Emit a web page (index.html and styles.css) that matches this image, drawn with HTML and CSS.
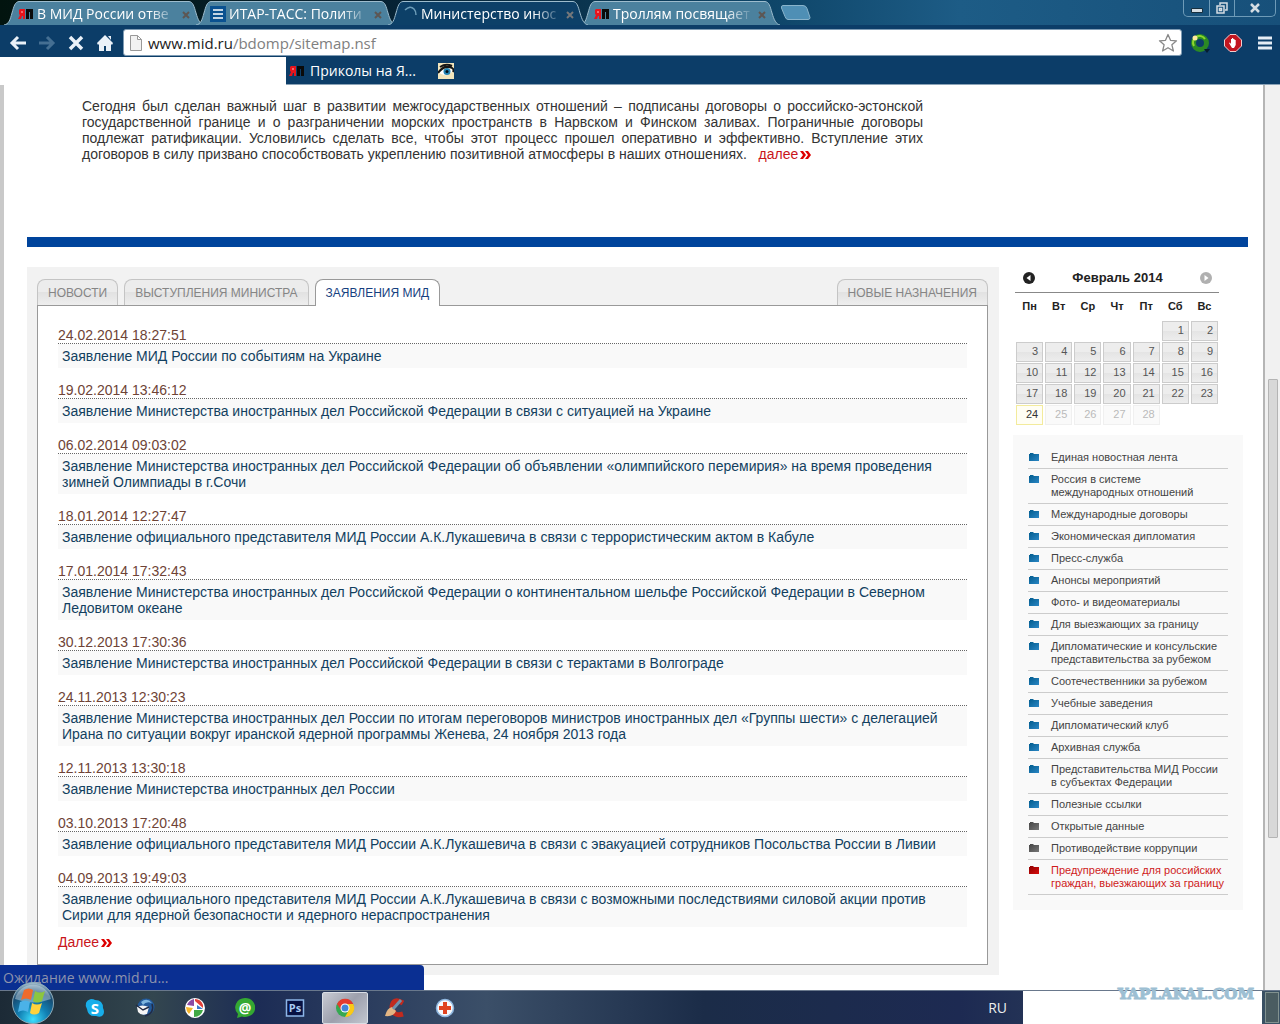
FILE: index.html
```html
<!DOCTYPE html>
<html lang="ru">
<head>
<meta charset="utf-8">
<title>Министерство иностранных дел</title>
<link rel="stylesheet" href="styles.css">
</head>
<body>
<svg class="defs" aria-hidden="true">
  <defs>
    <linearGradient id="blue" x1="0" y1="0" x2="1" y2="1"><stop offset="0" stop-color="#015b8d"/><stop offset="1" stop-color="#2a86c4"/></linearGradient>
    <linearGradient id="gray" x1="0" y1="0" x2="1" y2="1"><stop offset="0" stop-color="#444"/><stop offset="1" stop-color="#777"/></linearGradient>
    <linearGradient id="red" x1="0" y1="0" x2="1" y2="1"><stop offset="0" stop-color="#8d0000"/><stop offset="1" stop-color="#d80d0d"/></linearGradient>
    <radialGradient id="orb" cx=".5" cy=".9" r=".9"><stop offset="0" stop-color="#3fe0ff"/><stop offset=".4" stop-color="#1180b4"/><stop offset=".75" stop-color="#174a70"/><stop offset="1" stop-color="#a9c4d2"/></radialGradient>
    <path id="folder" d="M0 2V1h1V0h3l1 1h5v7H0z"/>
    <path id="tabshape" d="M0 24C5 23 6 19 8 12S11 1 15 .5H185C189 1 190 5 192 12S196 23 200 24"/>
    <path id="more" d="M0 0h3l3 4-3 4H0l3-4zM5 0h3l3 4-3 4H5l3-4z"/>
    <g id="yap"><path fill="#e8141c" d="M2 1h5v10H5V8H4l-1 3H0l2-4-1-1V2z"/><path fill="#f46a6a" d="M3 3h2v2H3z"/><path fill="#0a0a0a" d="M8 1h7v10h-3V4h-1v7H8z"/></g>
  </defs>
</svg>

<header class="tabstrip">
  <nav class="tabs">
    <div class="tab"><svg class="shape" viewBox="0 0 200 24" preserveAspectRatio="none"><use href="#tabshape"/></svg><svg class="favicon" viewBox="0 0 16 12"><use href="#yap"/></svg><a href="#" class="tab-title">В МИД России отве</a><button class="close" aria-label="Закрыть"><svg viewBox="0 0 8 8"><path d="M1 1l6 6M7 1L1 7"/></svg></button></div>
    <div class="tab"><svg class="shape" viewBox="0 0 200 24" preserveAspectRatio="none"><use href="#tabshape"/></svg><svg class="favicon" viewBox="0 0 16 16"><path fill="#0a5190" d="M0 0h16v16H0z"/><path stroke="#fff" stroke-width="1.500" d="M3 4h10M3 8h10M3 12h10"/></svg><a href="#" class="tab-title">ИТАР-ТАСС: Полити</a><button class="close" aria-label="Закрыть"><svg viewBox="0 0 8 8"><path d="M1 1l6 6M7 1L1 7"/></svg></button></div>
    <div class="tab current"><svg class="shape" viewBox="0 0 200 24" preserveAspectRatio="none"><use href="#tabshape"/></svg><svg class="favicon" viewBox="0 0 16 16"><path fill="none" stroke="#6c9cb8" stroke-width="1.500" d="M3 4q5-5 9-1 2 2 2 6"/></svg><a href="#" class="tab-title">Министерство инос</a><button class="close" aria-label="Закрыть"><svg viewBox="0 0 8 8"><path d="M1 1l6 6M7 1L1 7"/></svg></button></div>
    <div class="tab"><svg class="shape" viewBox="0 0 200 24" preserveAspectRatio="none"><use href="#tabshape"/></svg><svg class="favicon" viewBox="0 0 16 12"><use href="#yap"/></svg><a href="#" class="tab-title">Троллям посвящает</a><button class="close" aria-label="Закрыть"><svg viewBox="0 0 8 8"><path d="M1 1l6 6M7 1L1 7"/></svg></button></div>
    <button class="newtab" aria-label="Новая вкладка"><svg viewBox="0 0 32 16"><path fill="#4f8fb5" stroke="#8ab4cc" d="M3 .5h20q3 0 4 3l3 9q0 2-2 2H8q-2 0-3-3L1.500 3Q1 .5 3 .5z"/></svg></button>
  </nav>
  <div class="window-buttons">
    <button aria-label="Свернуть"><svg width="12" height="12" viewBox="0 0 12 12"><path fill="#d5dde3" stroke="#17303f" d="M.5 6.500h11v4H.5z"/></svg></button>
    <button aria-label="Восстановить"><svg width="12" height="12" viewBox="0 0 12 12"><path fill="none" stroke="#d5dde3" stroke-width="1.500" d="M4 3V1h7v7H9M1 4h7v7H1zM3.500 6.500h2v2h-2z"/></svg></button>
    <button class="wide" aria-label="Закрыть окно"><svg width="10" height="10" viewBox="0 0 10 10"><path stroke="#d5dde3" stroke-width="2.500" d="M1 1l8 8M9 1L1 9"/></svg></button>
  </div>
</header>

<div class="toolbar">
  <button aria-label="Назад"><svg width="18" height="16" viewBox="0 0 18 16"><path fill="none" stroke="#eaf1f8" stroke-width="3" d="M17 8H3M9 2L3 8l6 6"/></svg></button>
  <button aria-label="Вперёд"><svg width="18" height="16" viewBox="0 0 18 16"><path fill="none" stroke="#456f92" stroke-width="3" d="M1 8h14M9 2l6 6-6 6"/></svg></button>
  <button aria-label="Остановить"><svg width="16" height="16" viewBox="0 0 16 16"><path stroke="#eaf1f8" stroke-width="3.500" d="M2 2l12 12M14 2L2 14"/></svg></button>
  <button aria-label="Домой"><svg width="16" height="16" viewBox="0 0 16 16"><path fill="#eaf1f8" d="M8 0l8 8-1 2-1-1v7H9v-5H7v5H2V9l-1 1-1-2zM11 1h3v4z"/></svg></button>
  <div class="omnibox">
    <svg width="12" height="16" viewBox="0 0 12 16"><path fill="#f2f2f2" stroke="#999" d="M.5.5h7l4 4v11H.5zM7.500.5v4h4"/></svg>
    <a href="#" class="address">www.mid.ru<span>/bdomp/sitemap.nsf</span></a>
    <svg class="star" width="20" height="20" viewBox="0 0 20 20"><path fill="#fff" stroke="#888" stroke-width="1.300" stroke-linejoin="round" d="M10 1.500l2.500 5.800 6 .5-4.600 4 1.500 6.200-5.400-3.300L4.600 18l1.500-6.200-4.600-4 6-.5z"/></svg>
  </div>
  <div class="extensions">
    <button aria-label="Расширение"><svg width="20" height="20" viewBox="0 0 20 20"><circle cx="10" cy="10" r="6.500" fill="none" stroke="#2b8a24" stroke-width="5"/><path fill="none" stroke="#8ed62d" stroke-width="2" d="M4 13A6.500 6.500 0 0 1 15 6"/><circle cx="5" cy="5" r="2.500" fill="#ffe9a0"/><path fill="#051c30" d="M14 16h6l-3 4z"/></svg></button>
    <button aria-label="Блокировщик"><svg width="18" height="18" viewBox="0 0 18 18"><path fill="#c21520" stroke="#f0cfd0" d="M6 .5h6L17.500 6v6L12 17.500H6L.5 12V6z"/><path fill="#fff" d="M5 9l1-.5L7 10V5h1V4h1.200v1h1.200l.3 1h1v5l-1.700 3H8z"/></svg></button>
    <button aria-label="Меню"><svg width="14" height="16" viewBox="0 0 14 16"><path stroke="#e6edf5" stroke-width="3" d="M0 3h14M0 8h14M0 13h14"/></svg></button>
  </div>
</div>

<div class="bookmarks">
  <div class="bookmark-list">
    <svg width="16" height="12" viewBox="0 0 16 12"><use href="#yap"/></svg>
    <a href="#">Приколы на Я...</a>
    <svg class="eye" width="16" height="16" viewBox="0 0 16 16"><path fill="#f3e6bd" d="M0 0h16v16H0z"/><path fill="#fff" d="M1 10q6-7 14-3-3 6-9 5z"/><circle cx="9" cy="8.500" r="3.500" fill="#2384b4"/><circle cx="9" cy="8.500" r="1.500" fill="#041018"/><path fill="none" stroke="#151515" stroke-width="2" d="M0 10Q5 3 11 4t4 5M2 4q6-4 12-1"/></svg>
  </div>
</div>

<div class="viewport">
  <main class="page">
    <p class="intro">Сегодня был сделан важный шаг в развитии межгосударственных отношений – подписаны договоры о российско-эстонской государственной границе и о разграничении морских пространств в Нарвском и Финском заливах. Пограничные договоры подлежат ратификации. Условились сделать все, чтобы этот процесс прошел оперативно и эффективно. Вступление этих договоров в силу призвано способствовать укреплению позитивной атмосферы в наших отношениях. &nbsp; <a href="#" class="more">далее<svg viewBox="0 0 11 8"><use href="#more"/></svg></a></p>
    <div class="divider"></div>
    <div class="columns">
      <section class="news">
        <nav class="news-tabs">
          <a href="#">НОВОСТИ</a>
          <a href="#">ВЫСТУПЛЕНИЯ МИНИСТРА</a>
          <a href="#" class="selected">ЗАЯВЛЕНИЯ МИД</a>
          <a href="#" class="last">НОВЫЕ НАЗНАЧЕНИЯ</a>
        </nav>
        <div class="panel">
          <article><time>24.02.2014 18:27:51</time><a href="#">Заявление МИД России по событиям на Украине</a></article>
          <article><time>19.02.2014 13:46:12</time><a href="#">Заявление Министерства иностранных дел Российской Федерации в связи с ситуацией на Украине</a></article>
          <article><time>06.02.2014 09:03:02</time><a href="#">Заявление Министерства иностранных дел Российской Федерации об объявлении «олимпийского перемирия» на время проведения зимней Олимпиады в г.Сочи</a></article>
          <article><time>18.01.2014 12:27:47</time><a href="#">Заявление официального представителя МИД России А.К.Лукашевича в связи с террористическим актом в Кабуле</a></article>
          <article><time>17.01.2014 17:32:43</time><a href="#">Заявление Министерства иностранных дел Российской Федерации о континентальном шельфе Российской Федерации в Северном Ледовитом океане</a></article>
          <article><time>30.12.2013 17:30:36</time><a href="#">Заявление Министерства иностранных дел Российской Федерации в связи с терактами в Волгограде</a></article>
          <article><time>24.11.2013 12:30:23</time><a href="#">Заявление Министерства иностранных дел России по итогам переговоров министров иностранных дел «Группы шести» с делегацией Ирана по ситуации вокруг иранской ядерной программы Женева, 24 ноября 2013 года</a></article>
          <article><time>12.11.2013 13:30:18</time><a href="#">Заявление Министерства иностранных дел России</a></article>
          <article><time>03.10.2013 17:20:48</time><a href="#">Заявление официального представителя МИД России А.К.Лукашевича в связи с эвакуацией сотрудников Посольства России в Ливии</a></article>
          <article><time>04.09.2013 19:49:03</time><a href="#">Заявление официального представителя МИД России А.К.Лукашевича в связи с возможными последствиями силовой акции против Сирии для ядерной безопасности и ядерного нераспространения</a></article>
          <a href="#" class="more">Далее<svg viewBox="0 0 11 8"><use href="#more"/></svg></a>
        </div>
      </section>
      <aside>
        <div class="calendar">
          <div class="month">
            <button aria-label="Предыдущий месяц"><svg viewBox="0 0 12 12"><circle cx="6" cy="6" r="6" fill="#222"/><path fill="#fff" d="M7.500 3v6l-4-3z"/></svg></button>
            <strong>Февраль 2014</strong>
            <button aria-label="Следующий месяц"><svg viewBox="0 0 12 12"><circle cx="6" cy="6" r="6" fill="#b0b0b0"/><path fill="#fff" d="M4.500 3v6l4-3z"/></svg></button>
          </div>
          <table>
            <thead><tr><th>Пн</th><th>Вт</th><th>Ср</th><th>Чт</th><th>Пт</th><th>Сб</th><th>Вс</th></tr></thead>
            <tbody>
              <tr><td></td><td></td><td></td><td></td><td></td><td><a href="#">1</a></td><td><a href="#">2</a></td></tr>
              <tr><td><a href="#">3</a></td><td><a href="#">4</a></td><td><a href="#">5</a></td><td><a href="#">6</a></td><td><a href="#">7</a></td><td><a href="#">8</a></td><td><a href="#">9</a></td></tr>
              <tr><td><a href="#">10</a></td><td><a href="#">11</a></td><td><a href="#">12</a></td><td><a href="#">13</a></td><td><a href="#">14</a></td><td><a href="#">15</a></td><td><a href="#">16</a></td></tr>
              <tr><td><a href="#">17</a></td><td><a href="#">18</a></td><td><a href="#">19</a></td><td><a href="#">20</a></td><td><a href="#">21</a></td><td><a href="#">22</a></td><td><a href="#">23</a></td></tr>
              <tr><td><a href="#" class="today">24</a></td><td><span>25</span></td><td><span>26</span></td><td><span>27</span></td><td><span>28</span></td><td></td><td></td></tr>
            </tbody>
          </table>
        </div>
        <ul class="menu">
          <li><svg viewBox="0 0 10 8"><use href="#folder"/></svg><a href="#">Единая новостная лента</a></li>
          <li><svg viewBox="0 0 10 8"><use href="#folder"/></svg><a href="#">Россия в системе<br>международных отношений</a></li>
          <li><svg viewBox="0 0 10 8"><use href="#folder"/></svg><a href="#">Международные договоры</a></li>
          <li><svg viewBox="0 0 10 8"><use href="#folder"/></svg><a href="#">Экономическая дипломатия</a></li>
          <li><svg viewBox="0 0 10 8"><use href="#folder"/></svg><a href="#">Пресс-служба</a></li>
          <li><svg viewBox="0 0 10 8"><use href="#folder"/></svg><a href="#">Анонсы мероприятий</a></li>
          <li><svg viewBox="0 0 10 8"><use href="#folder"/></svg><a href="#">Фото- и видеоматериалы</a></li>
          <li><svg viewBox="0 0 10 8"><use href="#folder"/></svg><a href="#">Для выезжающих за границу</a></li>
          <li><svg viewBox="0 0 10 8"><use href="#folder"/></svg><a href="#">Дипломатические и консульские<br>представительства за рубежом</a></li>
          <li><svg viewBox="0 0 10 8"><use href="#folder"/></svg><a href="#">Соотечественники за рубежом</a></li>
          <li><svg viewBox="0 0 10 8"><use href="#folder"/></svg><a href="#">Учебные заведения</a></li>
          <li><svg viewBox="0 0 10 8"><use href="#folder"/></svg><a href="#">Дипломатический клуб</a></li>
          <li><svg viewBox="0 0 10 8"><use href="#folder"/></svg><a href="#">Архивная служба</a></li>
          <li><svg viewBox="0 0 10 8"><use href="#folder"/></svg><a href="#">Представительства МИД России<br>в субъектах Федерации</a></li>
          <li><svg viewBox="0 0 10 8"><use href="#folder"/></svg><a href="#">Полезные ссылки</a></li>
          <li class="muted"><svg viewBox="0 0 10 8"><use href="#folder"/></svg><a href="#">Открытые данные</a></li>
          <li class="muted"><svg viewBox="0 0 10 8"><use href="#folder"/></svg><a href="#">Противодействие коррупции</a></li>
          <li class="warning"><svg viewBox="0 0 10 8"><use href="#folder"/></svg><a href="#">Предупреждение для российских<br>граждан, выезжающих за границу</a></li>
        </ul>
      </aside>
    </div>
  </main>
  <div class="scrollbar"><div class="thumb"></div></div>
  <div class="status">Ожидание www.mid.ru...</div>
</div>

<footer class="taskbar">
  <button class="start" aria-label="Пуск"><svg viewBox="0 0 44 42"><circle cx="22" cy="21" r="20.500" fill="url(#orb)" stroke="#8eabb9"/><path fill="#d4e3ea" opacity=".45" d="M4 17a18.500 18.500 0 0 1 36 0Q22 24 4 17z"/><path fill="#ef6a2c" d="M13 8q5-3 9 0l-2 10q-5-3-10 0z"/><path fill="#8cc63f" d="M24 9q5 3 10 0l-3 10q-5 3-9 0z"/><path fill="#4bb2e8" d="M9 20q5-3 10 0l-2 10q-5-3-10 0z"/><path fill="#ffd23c" d="M21 21q5 3 10 0l-3 10q-5 3-9 0z"/></svg></button>
  <div class="apps">
    <button aria-label="Skype"><svg viewBox="0 0 20 20"><path fill="#18aeea" d="M6 1q3 0 4 1 8 0 8 8 2 4 0 7t-7 1q-8 1-9-7-2-3-1-6t5-4z"/></svg><b>S</b></button>
    <button aria-label="Почта"><svg viewBox="0 0 20 20"><circle cx="11" cy="9" r="8.500" fill="#235a9b"/><path fill="#7db5de" d="M6 4q6-5 11 1-6-2-9 2z"/><path fill="#f5f5f5" d="M2 9q5-3 12 0l-2 7q-6 2-9-2z"/><path fill="none" stroke="#222c45" stroke-width="1.500" d="M1 7l7 5 6-3M17 6q3 9-7 12"/></svg></button>
    <button aria-label="Picasa"><svg viewBox="0 0 20 20"><circle cx="10" cy="10" r="10" fill="#fff"/><path fill="#8a4ba5" d="M9 1v7L2 7q2-5 7-6z"/><path fill="#e2403a" d="M10 1q6 0 8 6v3l-8-7z"/><path fill="#f5b52c" d="M1 9l7 1-4 6q-3-3-3-7z"/><path fill="#40a945" d="M9 12h9q-2 7-9 7z"/><path fill="#3b79c9" d="M12 7l6 4h-6z"/></svg></button>
    <button aria-label="Агент"><svg viewBox="0 0 20 20"><path fill="#34a832" d="M10 0a10 9.500 0 1 1-3 18.500L2 20l1-4A10 9.500 0 0 1 10 0z"/></svg><b class="at">@</b></button>
    <button aria-label="Photoshop"><svg viewBox="0 0 20 20"><path fill="#071142" stroke="#8db6e8" stroke-width="1.500" d="M1.500 2h17v16h-17z"/></svg><b class="ps">Ps</b></button>
    <button aria-label="Chrome" class="active"><svg viewBox="0 0 20 20"><circle cx="10" cy="10" r="9" fill="#35a852"/><path fill="#e33b2e" d="M2 6a9 9 0 0 1 16.300 0H10L6 12z"/><path fill="#fbc918" d="M18.300 6A9 9 0 0 1 10 19l4-7-1-6z"/><circle cx="10" cy="10" r="4.500" fill="#fff"/><circle cx="10" cy="10" r="3.500" fill="#4285d8"/></svg></button>
    <button aria-label="CCleaner"><svg viewBox="0 0 20 20"><path fill="none" stroke="#c22a1e" stroke-width="5" d="M18 5Q8-1 7 9q1 10 11 7"/><path fill="#e3b583" d="M0 18q2-8 7-9l4 4q-2 6-11 5z"/><path stroke="#7091ac" stroke-width="3" d="M8 11l8-9"/></svg></button>
    <button aria-label="Аптечка"><svg viewBox="0 0 20 20"><circle cx="10" cy="10" r="8.500" fill="#f5f8fb" stroke="#8fb7e0" stroke-width="1.500"/><path fill="#e04420" d="M8 4h4v4h4v4h-4v4H8v-4H4V8h4z"/></svg></button>
  </div>
  <span class="lang">RU</span>
  <div class="blank"><span class="watermark">YAPLAKAL.COM</span></div>
  <div class="show-desktop"></div>
</footer>
</body>
</html>
```
FILE: styles.css
```css
* { box-sizing: border-box; }
body {
  margin: 0;
  background: #fff;
  font: 14px/16px "Liberation Sans", Arial, sans-serif;
  color: #333;
}
a { color: inherit; text-decoration: none; }
button { margin: 0; padding: 0; border: 0; background: none; color: inherit; font: inherit; }
svg { display: block; flex: none; }
.defs { position: absolute; width: 0; height: 0; }

/* Browser window */
.tabstrip {
  display: flex;
  justify-content: space-between;
  height: 25px;
  padding: 0 4px;
  background: linear-gradient(90deg, #02140f, #062233 30%, #0e4568 60%, #1d5c86 75%, #17507a);
  font: 14px/20px "Open Sans", "Noto Sans", sans-serif;
}
.tabs { display: flex; align-items: flex-end; }
.tab {
  position: relative;
  display: flex;
  align-items: center;
  width: 200px;
  height: 24px;
  margin-right: -8px;
  padding: 2px 14px 0 14px;
  color: #fff;
}
.tab > * { position: relative; }
.tab > .shape { position: absolute; inset: 0; width: 100%; height: 100%; fill: #4b819e; stroke: #9dbccd; }
.tab.current { z-index: 1; }
.tab.current > .shape { fill: #0d4068; }
.favicon { width: 16px; height: 16px; margin-right: 3px; }
.tab-title {
  flex: 1;
  white-space: nowrap;
  -webkit-mask-image: linear-gradient(90deg, #000 80%, transparent);
  mask-image: linear-gradient(90deg, #000 80%, transparent);
}
.close { margin: 2px 0 0 4px; }
.close svg { width: 8px; height: 8px; stroke: #5d5653; stroke-width: 2; }
.current .close svg { stroke: #75777a; }
.newtab { margin: 0 0 4px 8px; }
.newtab svg { width: 32px; height: 16px; }
.window-buttons { display: flex; height: 17px; border: 1px solid #6e9bb8; border-top: 0; border-radius: 0 0 5px 5px; }
.window-buttons button { display: grid; place-items: center; width: 25px; }
.window-buttons button + button { border-left: 1px solid #6e9bb8; }
.window-buttons .wide { width: 41px; }

.toolbar {
  display: flex;
  align-items: center;
  height: 32px;
  padding: 3px 8px 0 9px;
  background: #0c3d68;
}
.toolbar > button { display: grid; place-items: center; width: 17px; margin-right: 12px; }
.omnibox {
  display: flex;
  flex: 1;
  align-items: center;
  height: 27px;
  margin-left: -2px;
  padding: 0 3px 0 6px;
  border: 1px solid #7f9cb4;
  border-radius: 3px;
  background: #fff;
}
.address { flex: 1; margin-left: 6px; color: #222; font: 15px/20px "Open Sans", "Noto Sans", sans-serif; }
.address span { color: #808080; }
.extensions { display: flex; align-items: center; gap: 14px; margin-left: 8px; }
.extensions button:last-child { margin-left: 2px; }

.bookmarks { height: 28px; padding-left: 286px; }
.bookmark-list {
  display: flex;
  align-items: center;
  height: 28px;
  padding-left: 3px;
  border-bottom: 1px solid #8ba3b7;
  background: #0c3d68;
  color: #fff;
  font: 14px/20px "Open Sans", "Noto Sans", sans-serif;
}
.bookmark-list a { margin-left: 5px; }
.eye { margin-left: 22px; }

.viewport { position: relative; display: flex; border-left: 4px solid #c9c9c9; }
.scrollbar { display: flex; flex-direction: column; align-items: center; width: 17px; border-left: 2px solid #b5b5b5; background: #f1f1f1; }
.scrollbar::before { content: ""; flex: 295; }
.scrollbar::after { content: ""; flex: 152; }
.thumb { flex: 458; width: 10px; border: 1px solid #b4b4b4; border-radius: 1px; background: #d8d8d8; }
.status {
  position: absolute;
  left: -4px;
  bottom: 0;
  width: 428px;
  max-width: 424px;
  height: 25px;
  padding: 3px;
  border-radius: 0 4px 0 0;
  background: #0a2f92;
  color: #8d93ad;
  font: 14px/20px "Open Sans", "Noto Sans", sans-serif;
}

/* Site page */
.page { flex: 1; padding: 13px 15px 15px 23px; }
.intro { max-width: 841px; margin: 0 0 75px 55px; text-align: justify; }
.more { color: #c9151b; }
.more svg { display: inline-block; width: 11px; height: 8px; margin-left: 2px; fill: #d00; }
.divider { height: 10px; background: #00449c; }
.columns { display: flex; align-items: flex-start; gap: 14px; margin: 20px 5px 0 0; }
.news { flex: 1; padding: 12px 11px 10px 10px; background: #f2f2f2; }
.news-tabs { display: flex; gap: 6px; color: #858585; font-size: 12px; }
.news-tabs a {
  height: 26px;
  padding: 5px 10px;
  border: 1px solid #c4c4c4;
  border-bottom: 0;
  border-radius: 8px 8px 0 0;
  background: linear-gradient(#ececec 50%, #e2e2e2 50%, #eee);
}
.news-tabs .selected { height: 27px; margin-bottom: -1px; border-color: #999; background: #fff; color: #163f80; z-index: 1; }
.news-tabs .last { margin-left: auto; }
.panel { padding: 21px 20px 14px; border: 1px solid #999; background: #fff; }
.panel article { margin-bottom: 14px; }
.panel article:nth-of-type(10) { margin-bottom: 7px; }
.panel time { display: block; border-bottom: 1px dotted #666; color: #6e4336; }
.panel article a { display: block; padding: 4px; background: #f9f9f9; color: #123f5f; }

aside { width: 230px; }
.calendar { width: 204px; margin: 0 0 10px 2px; color: #222; }
.month { display: flex; align-items: center; justify-content: space-between; height: 26px; padding: 0 7px 4px 8px; border-bottom: 1px solid #888; font-size: 13px; }
.month svg { width: 12px; height: 12px; }
table { width: 100%; border-collapse: collapse; table-layout: fixed; font-size: 11px; line-height: 13px; }
th { height: 27px; padding: 0; }
td { height: 21px; padding: 1px 1px 0; text-align: right; }
td a, td span { display: block; height: 20px; padding: 2px 4px; border: 1px solid #ccc; background: linear-gradient(#ededed 50%, #e4e4e4 50%, #ededed); color: #555; }
td span { border-color: #f0f0f0; background: #fafafa; color: #bbb; }
td .today { border-color: #f3eb9c; background: #fffef4; color: #333; }
.menu { margin: 0; padding: 12px 15px 15px; background: #f9f9f9; list-style: none; color: #444; font-size: 11px; line-height: 13px; }
.menu li { display: flex; gap: 12px; padding: 4px 0 4px 1px; border-bottom: 1px solid #ccc; }
.menu svg { width: 10px; height: 8px; margin-top: 2px; fill: url(#blue); }
.menu a { white-space: nowrap; }
.menu .muted svg { fill: url(#gray); }
.menu .warning { color: #cf1b1b; }
.menu .warning svg { fill: url(#red); }

/* Desktop taskbar */
.taskbar {
  position: relative;
  display: flex;
  align-items: center;
  height: 34px;
  border-top: 1px solid #69788c;
  background: linear-gradient(90deg, #1c2a36, #33464f 12%, #1c2c55 20%, #3b4f68 38%, #1b2c48 55%, #1d2a52 75%, #3b5264);
}
.start { align-self: flex-end; width: 44px; margin-left: 11px; }
.start svg { width: 44px; height: 42px; }
.apps { display: flex; gap: 4px; height: 32px; margin: 0 auto 0 17px; }
.apps button { display: grid; place-items: center; width: 46px; }
.apps button > * { grid-area: 1 / 1; }
.apps svg { width: 20px; height: 20px; }
.apps b { color: #fff; font: bold 15px/16px "Open Sans", sans-serif; }
.apps .at { font-size: 14px; }
.apps .ps { color: #a9ccf4; font-size: 11px; }
.apps .active { border: 1px solid #d9dee5; border-radius: 2px; background: linear-gradient(135deg, #c8cbd3, #9da0ad 50%, #c1c6cf); }
.lang { margin-right: 16px; color: #eee; font: 14px/20px "Open Sans", sans-serif; }
.blank { position: relative; align-self: stretch; width: 239px; background: #fff; }
.watermark { position: absolute; right: 8px; top: -5px; color: #9dbfd3; font: bold 15px/16px "DejaVu Serif", serif; -webkit-text-stroke: 1px #9dbfd3; }
.show-desktop { align-self: stretch; width: 14px; margin: 1px 1px 1px 3px; border: 1px solid #81918f; background: #4a5c61; }
```
